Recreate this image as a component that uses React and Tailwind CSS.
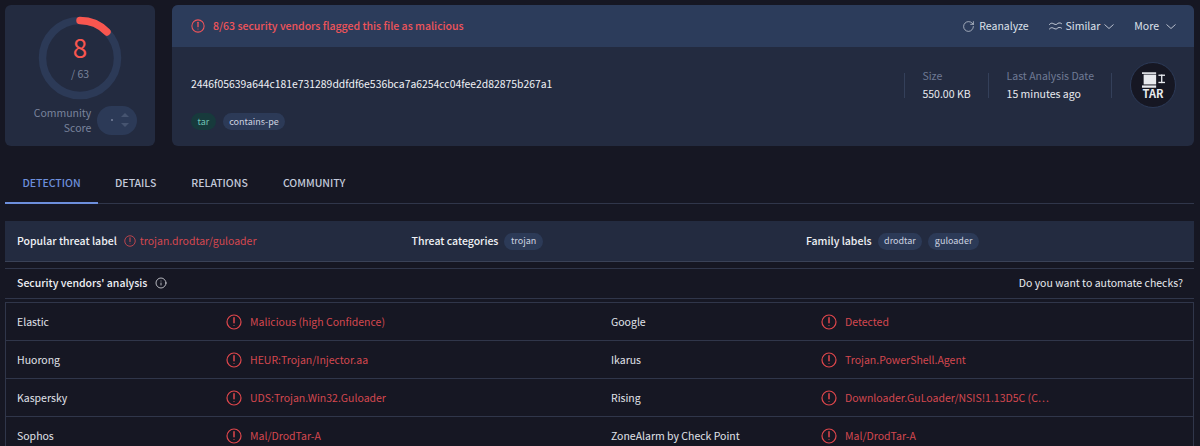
import { RotateCw, Info } from "lucide-react";

const rows = [
    ["Elastic", "Malicious (high Confidence)", "Google", "Detected"],
    ["Huorong", "HEUR:Trojan/Injector.aa", "Ikarus", "Trojan.PowerShell.Agent"],
    ["Kaspersky", "UDS:Trojan.Win32.Guloader", "Rising", "Downloader.GuLoader/NSIS!1.13D5C (C…"],
    ["Sophos", "Mal/DrodTar-A", "ZoneAlarm by Check Point", "Mal/DrodTar-A"],
];

const AlertIcon = ({className}) => (
    <svg viewBox="0 0 16 16" fill="none" stroke="currentColor" strokeWidth="1.2" className={className}>
        <circle cx="8" cy="8" r="7"/>
        <path d="M8 3.8v5" strokeWidth="1.5" strokeLinecap="round"/>
        <circle cx="8" cy="11.5" r="0.6" fill="currentColor" stroke="none"/>
    </svg>
);

const Chevron = ({className}) => (
    <svg viewBox="0 0 10 5" fill="none" stroke="currentColor" strokeWidth="0.8" className={className}>
        <path d="M.5.5 5 4.500 9.500.5"/>
    </svg>
);

const SimilarIcon = () => (
    <svg viewBox="0 0 16 10" fill="none" stroke="currentColor" strokeWidth="1" className="w-[15px] h-[9px]">
        <path d="M1 3c2-2 3-2 5-1s3 1 4 0 3-1.500 5 0"/>
        <path d="M1 8c2-2 3-2 5-1s3 1 4 0 3-1.500 5 0"/>
    </svg>
);

const TarIcon = () => (
    <svg viewBox="0 0 70 47" className="w-[23px] h-[16px]" fill="#e8eaef">
        <rect x="0" y="0" width="43" height="5"/>
        <rect x="5" y="7" width="38" height="30"/>
        <rect x="0" y="40" width="43" height="7"/>
        <rect x="50" y="7" width="20" height="4"/>
        <rect x="58" y="7" width="4" height="26"/>
        <rect x="50" y="29" width="20" height="4"/>
    </svg>
);

const Chip = ({children}) => (
    <span className="h-[17px] px-[6.500px] flex items-center rounded-full bg-[#2c3a57] text-[9px] text-[#cdd3e0]">
        {children}
    </span>
);

export default function App() {
    return (
        <div className="w-[1200px] h-[446px] overflow-hidden bg-[#161723] text-[#e8eaef] font-['Noto_Sans_CJK_JP',sans-serif] text-[10.500px] pt-[5px] px-[5px]">
            <div className="flex gap-[17px] h-[141px] pr-[1px]">
                <div className="w-[150px] shrink-0 rounded-md bg-[#232b40] flex flex-col items-center pt-[11px]">
                    <div className="relative w-[84px] h-[84px]">
                        <svg viewBox="0 0 84 84" className="w-[84px] h-[84px] -rotate-90">
                            <circle cx="42" cy="42" r="37.500" fill="none" stroke="#2c3a57" strokeWidth="7.500"/>
                            <circle cx="42" cy="42" r="37.500" fill="none" stroke="#f9564f" strokeWidth="7.500" strokeLinecap="round" strokeDasharray="30 236"/>
                        </svg>
                        <div className="absolute inset-0 flex flex-col items-center pt-[12px]">
                            <span className="text-[26px] leading-[38px] text-[#f9564f]">8</span>
                            <span className="text-[10.500px] leading-[16px] text-[#79839c]">/ 63</span>
                        </div>
                    </div>
                    <div className="flex items-center gap-[6px] mt-[5px] pl-[11px]">
                        <div className="text-right text-[10.500px] leading-[15px] text-[#79839c]">Community<br/>Score</div>
                        <div className="w-[40px] h-[29px] rounded-full bg-[#2c3a57] flex items-center justify-end gap-[8px] pr-[8px]">
                            <span className="w-[2px] h-[2px] rounded-full bg-[#79839c]"></span>
                            <div className="flex flex-col gap-[6px]">
                                <span className="block w-0 h-0 border-x-[4px] border-x-transparent border-b-[4px] border-b-[#465470]"></span>
                                <span className="block w-0 h-0 border-x-[4px] border-x-transparent border-t-[4px] border-t-[#465470]"></span>
                            </div>
                        </div>
                    </div>
                </div>

                <div className="flex-1 rounded-md bg-[#232b40] overflow-hidden">
                    <div className="h-[42px] bg-[#2c3c5b] flex items-center justify-between pl-[19px] pr-[18px]">
                        <div className="flex items-center gap-[8px] text-[#f0545a] font-medium">
                            <AlertIcon className="w-[14px] h-[14px]"/>
                            <span>8/63 security vendors flagged this file as malicious</span>
                        </div>
                        <div className="flex items-center text-[#dde1ea]">
                            <RotateCw size={13} strokeWidth={1.2} className="mr-[4px]"/>
                            <span className="mr-[19px]">Reanalyze</span>
                            <SimilarIcon/>
                            <span className="ml-[3px]">Similar</span>
                            <Chevron className="w-[10px] h-[5px] ml-[4px] mr-[20px]"/>
                            <span>More</span>
                            <Chevron className="w-[10px] h-[5px] ml-[7px]"/>
                        </div>
                    </div>
                    <div className="flex items-start justify-between pl-[19px] pr-[18px]">
                        <div>
                            <div className="mt-[29px] text-[10.400px] leading-[15px] text-[#f0f2f6]">2446f05639a644c181e731289ddfdf6e536bca7a6254cc04fee2d82875b267a1</div>
                            <div className="flex gap-[7px] mt-[22px]">
                                <span className="h-[17px] px-[6.500px] flex items-center rounded-full bg-[#173a3c] text-[9px] text-[#6fc4b4]">tar</span>
                                <Chip>contains-pe</Chip>
                            </div>
                        </div>
                        <div className="flex items-center mt-[15px]">
                            <div className="border-l border-[#34405a] h-[25px]"></div>
                            <div className="pl-[17px] pr-[17px] leading-[18px]">
                                <div className="text-[#6f7a94]">Size</div>
                                <div>550.00 KB</div>
                            </div>
                            <div className="border-l border-[#34405a] h-[25px]"></div>
                            <div className="pl-[18px] pr-[17px] leading-[18px]">
                                <div className="text-[#6f7a94]">Last Analysis Date</div>
                                <div>15 minutes ago</div>
                            </div>
                            <div className="border-l border-[#34405a] h-[25px]"></div>
                            <div className="ml-[18px] w-[46px] h-[46px] rounded-full bg-[#161723] border border-[#2c3a57] flex flex-col items-center justify-center">
                                <TarIcon/>
                                <span className="text-[11px] leading-[11px] font-bold">TAR</span>
                            </div>
                        </div>
                    </div>
                </div>
            </div>

            <div className="mt-[14px] h-[44px] border-b border-[#30364a] flex items-end mr-[1px] font-medium">
                <div className="w-[93px] h-[44px] -mb-px pt-[3px] flex items-center justify-center border-b-2 border-[#6d8fdc] text-[#6d8fdc]">DETECTION</div>
                <div className="flex h-[44px] items-center pt-[3px] text-[#c3cada] pl-[17px] gap-[35px]">
                    <span>DETAILS</span>
                    <span>RELATIONS</span>
                    <span>COMMUNITY</span>
                </div>
            </div>

            <div className="mt-[17px] h-[41px] bg-[#232b40] border-b border-[#3a4257] flex items-center pl-[12px] mr-[1px]">
                <div className="w-[394.500px] flex items-center">
                    <span className="font-medium text-[#f0f2f6]">Popular threat label</span>
                    <AlertIcon className="w-[12px] h-[12px] text-[#c8474f] ml-[7px]"/>
                    <span className="text-[#d4474f] ml-[4px]">trojan.drodtar/guloader</span>
                </div>
                <div className="w-[394.500px] flex items-center gap-[6px]">
                    <span className="font-medium text-[#f0f2f6]">Threat categories</span>
                    <Chip>trojan</Chip>
                </div>
                <div className="flex items-center gap-[6px]">
                    <span className="font-medium text-[#f0f2f6]">Family labels</span>
                    <Chip>drodtar</Chip>
                    <Chip>guloader</Chip>
                </div>
            </div>

            <div className="mt-[6px] h-[31px] pb-[1px] border-y border-[#30364a] flex items-center justify-between pl-[12px] pr-[11px] mr-[1px]">
                <div className="flex items-center gap-[8px]">
                    <span className="font-medium text-[#f0f2f6]">Security vendors' analysis</span>
                    <Info size={12} strokeWidth={1.500}/>
                </div>
                <span className="text-[#e8eaef]">Do you want to automate checks?</span>
            </div>

            <div className="mt-[3px] border border-[#30364a] mr-[1px]">
                {rows.map((row) => (
                    <div key={row[0]} className="h-[38px] grid grid-cols-[209px_385px_210px_1fr] items-center pl-[11px] border-b border-[#30364a]">
                        <span className="text-[#e0e3ea]">{row[0]}</span>
                        <div className="flex items-center gap-[8px] text-[#d4474f]">
                            <AlertIcon className="w-[16px] h-[16px] text-[#e0474c]"/>
                            <span>{row[1]}</span>
                        </div>
                        <span className="text-[#e0e3ea]">{row[2]}</span>
                        <div className="flex items-center gap-[8px] text-[#d4474f]">
                            <AlertIcon className="w-[16px] h-[16px] text-[#e0474c]"/>
                            <span>{row[3]}</span>
                        </div>
                    </div>
                ))}
            </div>
        </div>
    );
}
